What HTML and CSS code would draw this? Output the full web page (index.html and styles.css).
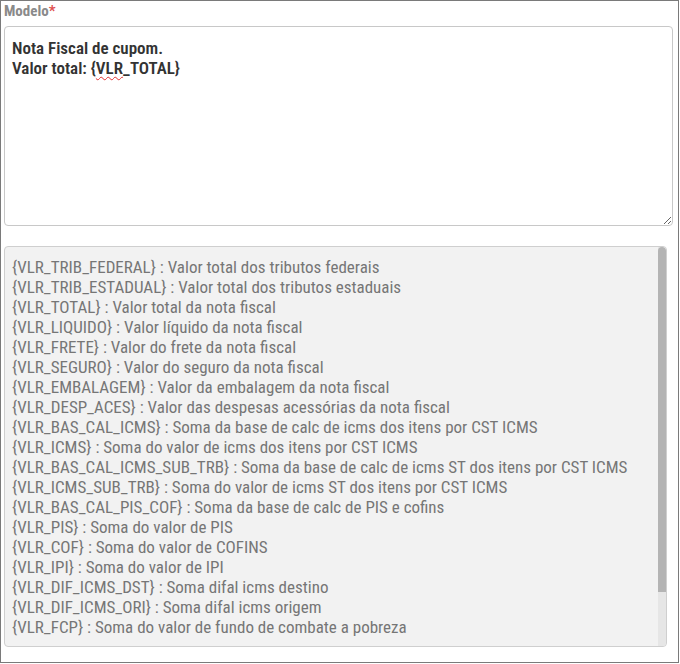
FILE: index.html
```html
<!DOCTYPE html>
<html lang="pt-BR">
<head>
    <meta charset="UTF-8">
    <title>Modelo</title>
    <link rel="stylesheet" href="styles.css">
</head>
<body>
    <div class="panel">
        <label class="field-label" for="modelo">Modelo<span class="required">*</span></label>

        <!-- Editor do modelo -->
        <div id="modelo" class="editor" contenteditable="true" spellcheck="false">
            <div>Nota Fiscal de cupom.</div>
            <div>Valor total: {<span class="misspelled">VLR</span>_TOTAL}</div>
        </div>

        <!-- Lista de variáveis -->
        <div class="vars">
            <div class="vars-list">
                <div>{VLR_TRIB_FEDERAL} : Valor total dos tributos federais</div>
                <div>{VLR_TRIB_ESTADUAL} : Valor total dos tributos estaduais</div>
                <div>{VLR_TOTAL} : Valor total da nota fiscal</div>
                <div>{VLR_LIQUIDO} : Valor líquido da nota fiscal</div>
                <div>{VLR_FRETE} : Valor do frete da nota fiscal</div>
                <div>{VLR_SEGURO} : Valor do seguro da nota fiscal</div>
                <div>{VLR_EMBALAGEM} : Valor da embalagem da nota fiscal</div>
                <div>{VLR_DESP_ACES} : Valor das despesas acessórias da nota fiscal</div>
                <div>{VLR_BAS_CAL_ICMS} : Soma da base de calc de icms dos itens por CST ICMS</div>
                <div>{VLR_ICMS} : Soma do valor de icms dos itens por CST ICMS</div>
                <div>{VLR_BAS_CAL_ICMS_SUB_TRB} : Soma da base de calc de icms ST dos itens por CST ICMS</div>
                <div>{VLR_ICMS_SUB_TRB} : Soma do valor de icms ST dos itens por CST ICMS</div>
                <div>{VLR_BAS_CAL_PIS_COF} : Soma da base de calc de PIS e cofins</div>
                <div>{VLR_PIS} : Soma do valor de PIS</div>
                <div>{VLR_COF} : Soma do valor de COFINS</div>
                <div>{VLR_IPI} : Soma do valor de IPI</div>
                <div>{VLR_DIF_ICMS_DST} : Soma difal icms destino</div>
                <div>{VLR_DIF_ICMS_ORI} : Soma difal icms origem</div>
                <div>{VLR_FCP} : Soma do valor de fundo de combate a pobreza</div>
            </div>
            <div class="scroll-track"><div class="scroll-thumb"></div></div>
        </div>
    </div>
</body>
</html>
```
FILE: styles.css
```css
body {
    margin: 0;
    font-family: 'Roboto Condensed', 'Roboto', sans-serif;
    background: #fff;
}

.panel {
    box-sizing: border-box;
    width: 679px;
    height: 663px;
    border: 1px solid #7a7a7a;
    padding: 0 3px;
}

.field-label {
    display: block;
    font-size: 15px;
    font-weight: 700;
    line-height: 20px;
    color: #8a8a8a;
    margin-bottom: 5px;
}

.required {
    color: #e05050;
}

.editor {
    box-sizing: border-box;
    width: 669px;
    height: 200px;
    border: 1px solid #c8c8c8;
    border-radius: 4px;
    padding: 11px 7px;
    font-size: 17px;
    font-weight: 600;
    line-height: 20px;
    color: #333;
    overflow: auto;
    resize: vertical;
    outline: none;
}

.misspelled {
    text-decoration: underline wavy #e03030;
    text-decoration-thickness: 1px;
    text-underline-offset: 2px;
}

.vars {
    position: relative;
    box-sizing: border-box;
    width: 663px;
    height: 401px;
    margin-top: 20px;
    border: 1px solid #cfcfcf;
    border-radius: 4px;
    background: #f2f2f2;
    overflow: hidden;
}

.vars-list {
    padding: 10px 7px;
    font-size: 17px;
    line-height: 20px;
    color: #767676;
    white-space: nowrap;
}

/* barra de rolagem desenhada à mão */
.scroll-track {
    position: absolute;
    top: 0;
    right: 0;
    bottom: 0;
    width: 8px;
    background: #e6e6e6;
}

.scroll-thumb {
    height: 345px;
    background: #b4b4b4;
    border-radius: 4px 4px 0 0;
}
```
